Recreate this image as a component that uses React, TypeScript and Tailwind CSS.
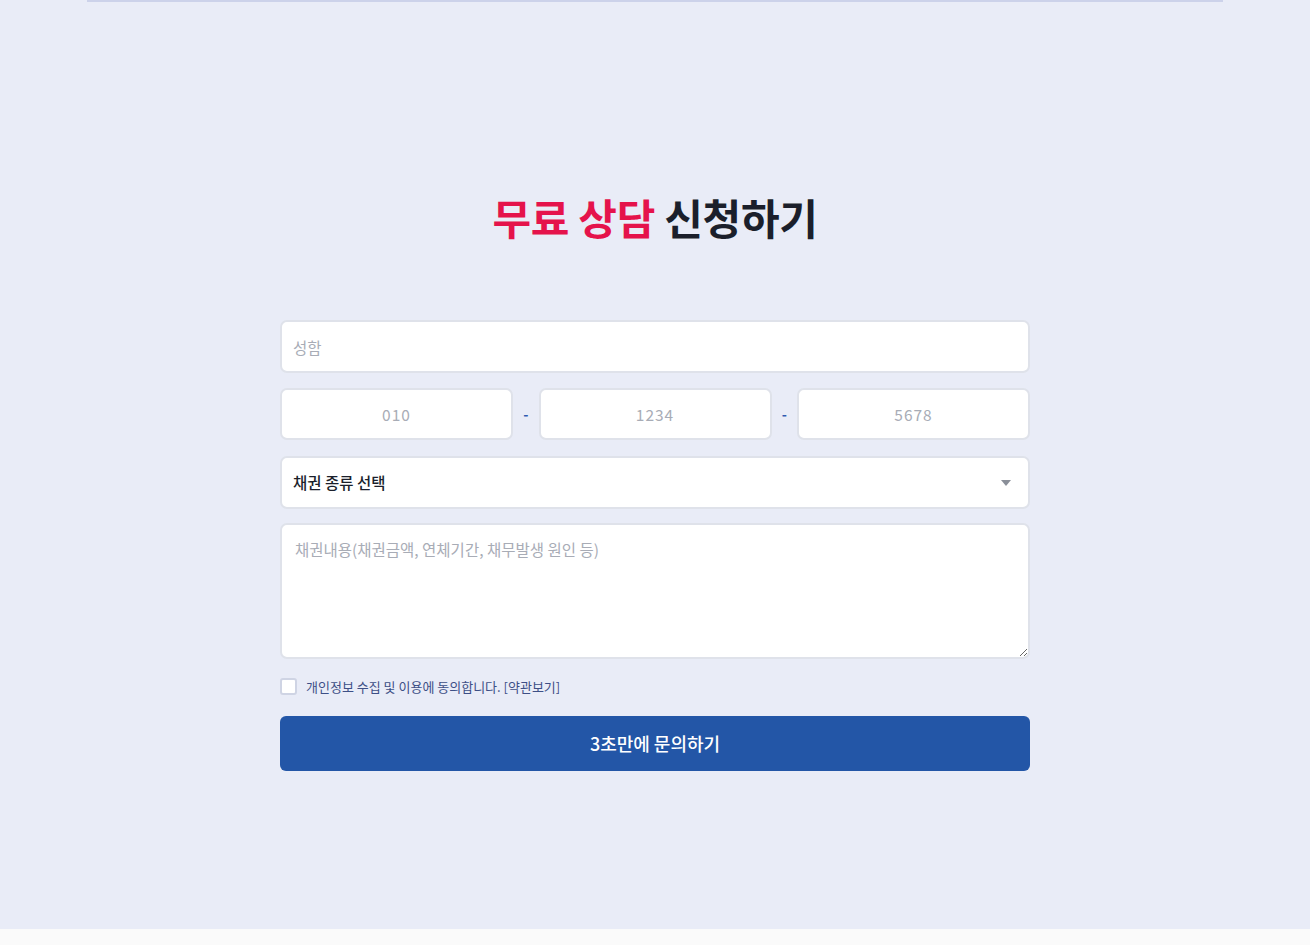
import React from "react";

const font = { fontFamily: '"Noto Sans CJK KR", "Noto Sans", sans-serif' };

export default function App() {
  return (
    <div className="min-h-screen bg-[#fafafa]" style={font}>
      <section className="h-[929px] bg-[#e9ecf7] flex flex-col items-center">
        <div className="w-[1136px] h-[2px] bg-[#ccd2ea]" />
        <h1 className="mt-[189px] text-[42px] leading-[52px] font-bold tracking-[-0.3px]">
          <span className="text-[#e5134b]">무료 상담</span>{" "}
          <span className="text-[#1b1f2b]">신청하기</span>
        </h1>
        <form className="mt-[77px] w-[750px] flex flex-col">
          <input
            className="h-[53px] w-full rounded-[7px] border-2 border-[#dfe2ea] bg-white px-[11px] text-[15.5px] text-[#333] placeholder:text-[#a8acb6] outline-none"
            placeholder="성함"
          />
          <div className="mt-[15px] flex items-center">
            <input
              className="h-[52px] w-[233px] rounded-[7px] border-2 border-[#dfe2ea] bg-white text-center text-[15.5px] tracking-[1px] placeholder:text-[#a8acb6] outline-none"
              placeholder="010"
            />
            <span className="flex-1 text-center text-[14px] font-bold text-[#2f5bb0]">-</span>
            <input
              className="h-[52px] w-[233px] rounded-[7px] border-2 border-[#dfe2ea] bg-white text-center text-[15.5px] tracking-[1px] placeholder:text-[#a8acb6] outline-none"
              placeholder="1234"
            />
            <span className="flex-1 text-center text-[14px] font-bold text-[#2f5bb0]">-</span>
            <input
              className="h-[52px] w-[233px] rounded-[7px] border-2 border-[#dfe2ea] bg-white text-center text-[15.5px] tracking-[1px] placeholder:text-[#a8acb6] outline-none"
              placeholder="5678"
            />
          </div>
          <div className="mt-[16px] h-[53px] w-full rounded-[7px] border-2 border-[#dfe2ea] bg-white px-[11px] flex items-center justify-between">
            <span className="text-[15.5px] text-[#1b1f2b] font-medium">채권 종류 선택</span>
            <svg width="10" height="6" viewBox="0 0 10 6" className="mr-[6px]">
              <path d="M0 0 L10 0 L5 6 Z" fill="#8a8f99" />
            </svg>
          </div>
          <textarea
            className="mt-[14px] h-[136px] w-full rounded-[7px] border-2 border-[#dfe2ea] bg-white px-[13px] py-[13px] text-[15.5px] placeholder:text-[#a8acb6] outline-none resize-y"
            placeholder="채권내용(채권금액, 연체기간, 채무발생 원인 등)"
          />
          <label className="mt-[18px] flex items-center gap-[9px]">
            <span className="h-[17px] w-[17px] rounded-[3px] border-2 border-[#cfd4e4] bg-white" />
            <span className="text-[13px] text-[#3d4f86]">
              개인정보 수집 및 이용에 동의합니다. [약관보기]
            </span>
          </label>
          <button
            type="button"
            className="mt-[19px] h-[55px] w-full rounded-[6px] bg-[#2356a7] text-white text-[18px] font-medium"
          >
            3초만에 문의하기
          </button>
        </form>
      </section>
      <div className="h-[16px] bg-[#fafafa]" />
    </div>
  );
}
